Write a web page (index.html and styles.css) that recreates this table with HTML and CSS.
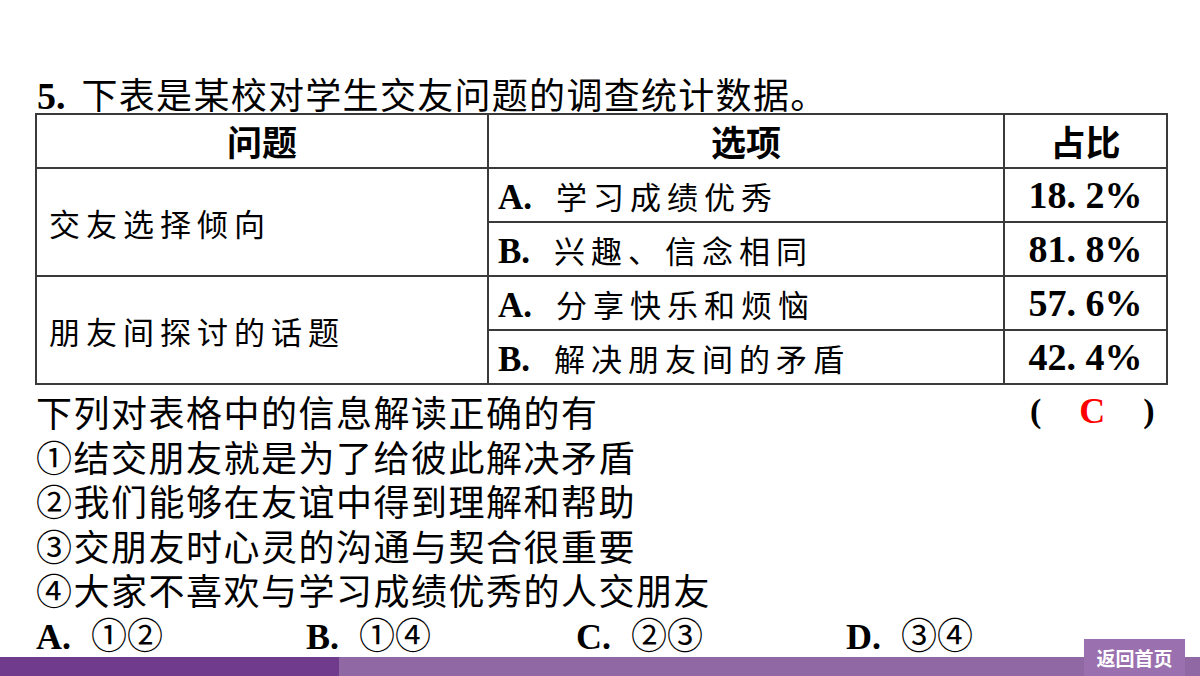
FILE: index.html
```html
<!DOCTYPE html>
<html lang="zh">
<head>
<meta charset="utf-8">
<title>交友问题</title>
<link rel="stylesheet" href="styles.css">
</head>
<body>
<div class="page">
  <div class="title"><span class="num">5.</span>下表是某校对学生交友问题的调查统计数据。</div>
  <table class="survey">
    <colgroup><col class="c1"><col class="c2"><col class="c3"></colgroup>
    <tr class="head"><th>问题</th><th>选项</th><th>占比</th></tr>
    <tr><td class="topic" rowspan="2">交友选择倾向</td><td class="opt"><span class="lt">A.</span>学习成绩优秀</td><td class="pct">18. 2%</td></tr>
    <tr><td class="opt"><span class="lt">B.</span>兴趣、信念相同</td><td class="pct">81. 8%</td></tr>
    <tr><td class="topic" rowspan="2">朋友间探讨的话题</td><td class="opt"><span class="lt">A.</span>分享快乐和烦恼</td><td class="pct">57. 6%</td></tr>
    <tr><td class="opt"><span class="lt">B.</span>解决朋友间的矛盾</td><td class="pct">42. 4%</td></tr>
  </table>
  <div class="question">
    <div class="line q-first"><span>下列对表格中的信息解读正确的有</span><span class="answer"><span class="par">(</span><span class="ans">C</span><span class="par">)</span></span></div>
    <div class="line">①结交朋友就是为了给彼此解决矛盾</div>
    <div class="line">②我们能够在友谊中得到理解和帮助</div>
    <div class="line">③交朋友时心灵的沟通与契合很重要</div>
    <div class="line">④大家不喜欢与学习成绩优秀的人交朋友</div>
    <div class="choices">
      <div class="choice"><span class="lt">A.</span>①②</div>
      <div class="choice"><span class="lt">B.</span>①④</div>
      <div class="choice"><span class="lt">C.</span>②③</div>
      <div class="choice"><span class="lt">D.</span>③④</div>
    </div>
  </div>
  <div class="footer">
    <div class="bar-dark"></div><div class="bar-light"></div>
    <div class="home">返回首页</div>
  </div>
</div>
</body>
</html>
```
FILE: styles.css
```css
html, body {
  margin: 0;
  padding: 0;
  background: #fff;
}
.page {
  width: 1200px;
  height: 676px;
  display: flex;
  flex-direction: column;
  overflow: hidden;
  font-family: "Noto Sans CJK SC", "Liberation Serif", serif;
  color: #000;
}
.title {
  margin: 77px 0 0 37px;
  height: 36px;
  font-size: 36px;
  line-height: 32px;
  letter-spacing: 1.3px;
  white-space: nowrap;
}
.num {
  font-family: "Liberation Serif", serif;
  font-weight: bold;
  font-size: 38px;
  letter-spacing: 0;
  margin-right: 16px;
}
.survey {
  margin: 0 0 0 35px;
  width: 1131px;
  border-collapse: collapse;
  table-layout: fixed;
}
.c1 { width: 452px; }
.c2 { width: 516px; }
.c3 { width: 163px; }
.survey th, .survey td {
  border: 2px solid #3a3a3a;
  height: 52px;
  padding: 0;
  white-space: nowrap;
}
.survey th {
  font-weight: bold;
  font-size: 35px;
  line-height: 40px;
  text-align: center;
}
.topic {
  font-size: 31px;
  letter-spacing: 6px;
  padding-left: 12px !important;
  vertical-align: middle;
}
.opt {
  font-size: 31px;
  letter-spacing: 6px;
  padding-left: 9px !important;
}
.lt {
  font-family: "Liberation Serif", serif;
  font-weight: bold;
  letter-spacing: 0;
}
.opt .lt {
  font-size: 35px;
  margin-right: 24px;
}
.pct {
  font-family: "Liberation Serif", serif;
  font-weight: bold;
  font-size: 38px;
  text-align: center;
}
.question {
  margin: 4px 0 0 36px;
  font-size: 36px;
  line-height: 44.5px;
  letter-spacing: 1.5px;
}
.line { white-space: nowrap; }
.q-first {
  display: flex;
  width: 1120px;
  justify-content: space-between;
}
.answer {
  display: flex;
  width: 126px;
  justify-content: space-between;
  font-family: "Liberation Serif", serif;
  font-weight: bold;
  font-size: 34px;
}
.ans {
  color: #ff0000;
  font-size: 36px;
}
.choices {
  display: flex;
  height: 42px;
  line-height: 42px;
}
.choice {
  width: 270px;
  font-size: 36px;
  white-space: nowrap;
  letter-spacing: 0;
}
.choice .lt {
  font-size: 36px;
  margin-right: 20px;
}
.footer {
  margin-top: auto;
  height: 19px;
  flex-shrink: 0;
  position: relative;
  display: flex;
}
.bar-dark {
  width: 339px;
  background: #703b8d;
}
.bar-light {
  flex: 1;
  background: #9069a4;
}
.home {
  position: absolute;
  right: 15px;
  bottom: 0;
  width: 101px;
  height: 37px;
  background: #9a70ae;
  color: #fff;
  font-weight: bold;
  font-size: 19px;
  line-height: 37px;
  text-align: center;
  letter-spacing: 0;
}
```
